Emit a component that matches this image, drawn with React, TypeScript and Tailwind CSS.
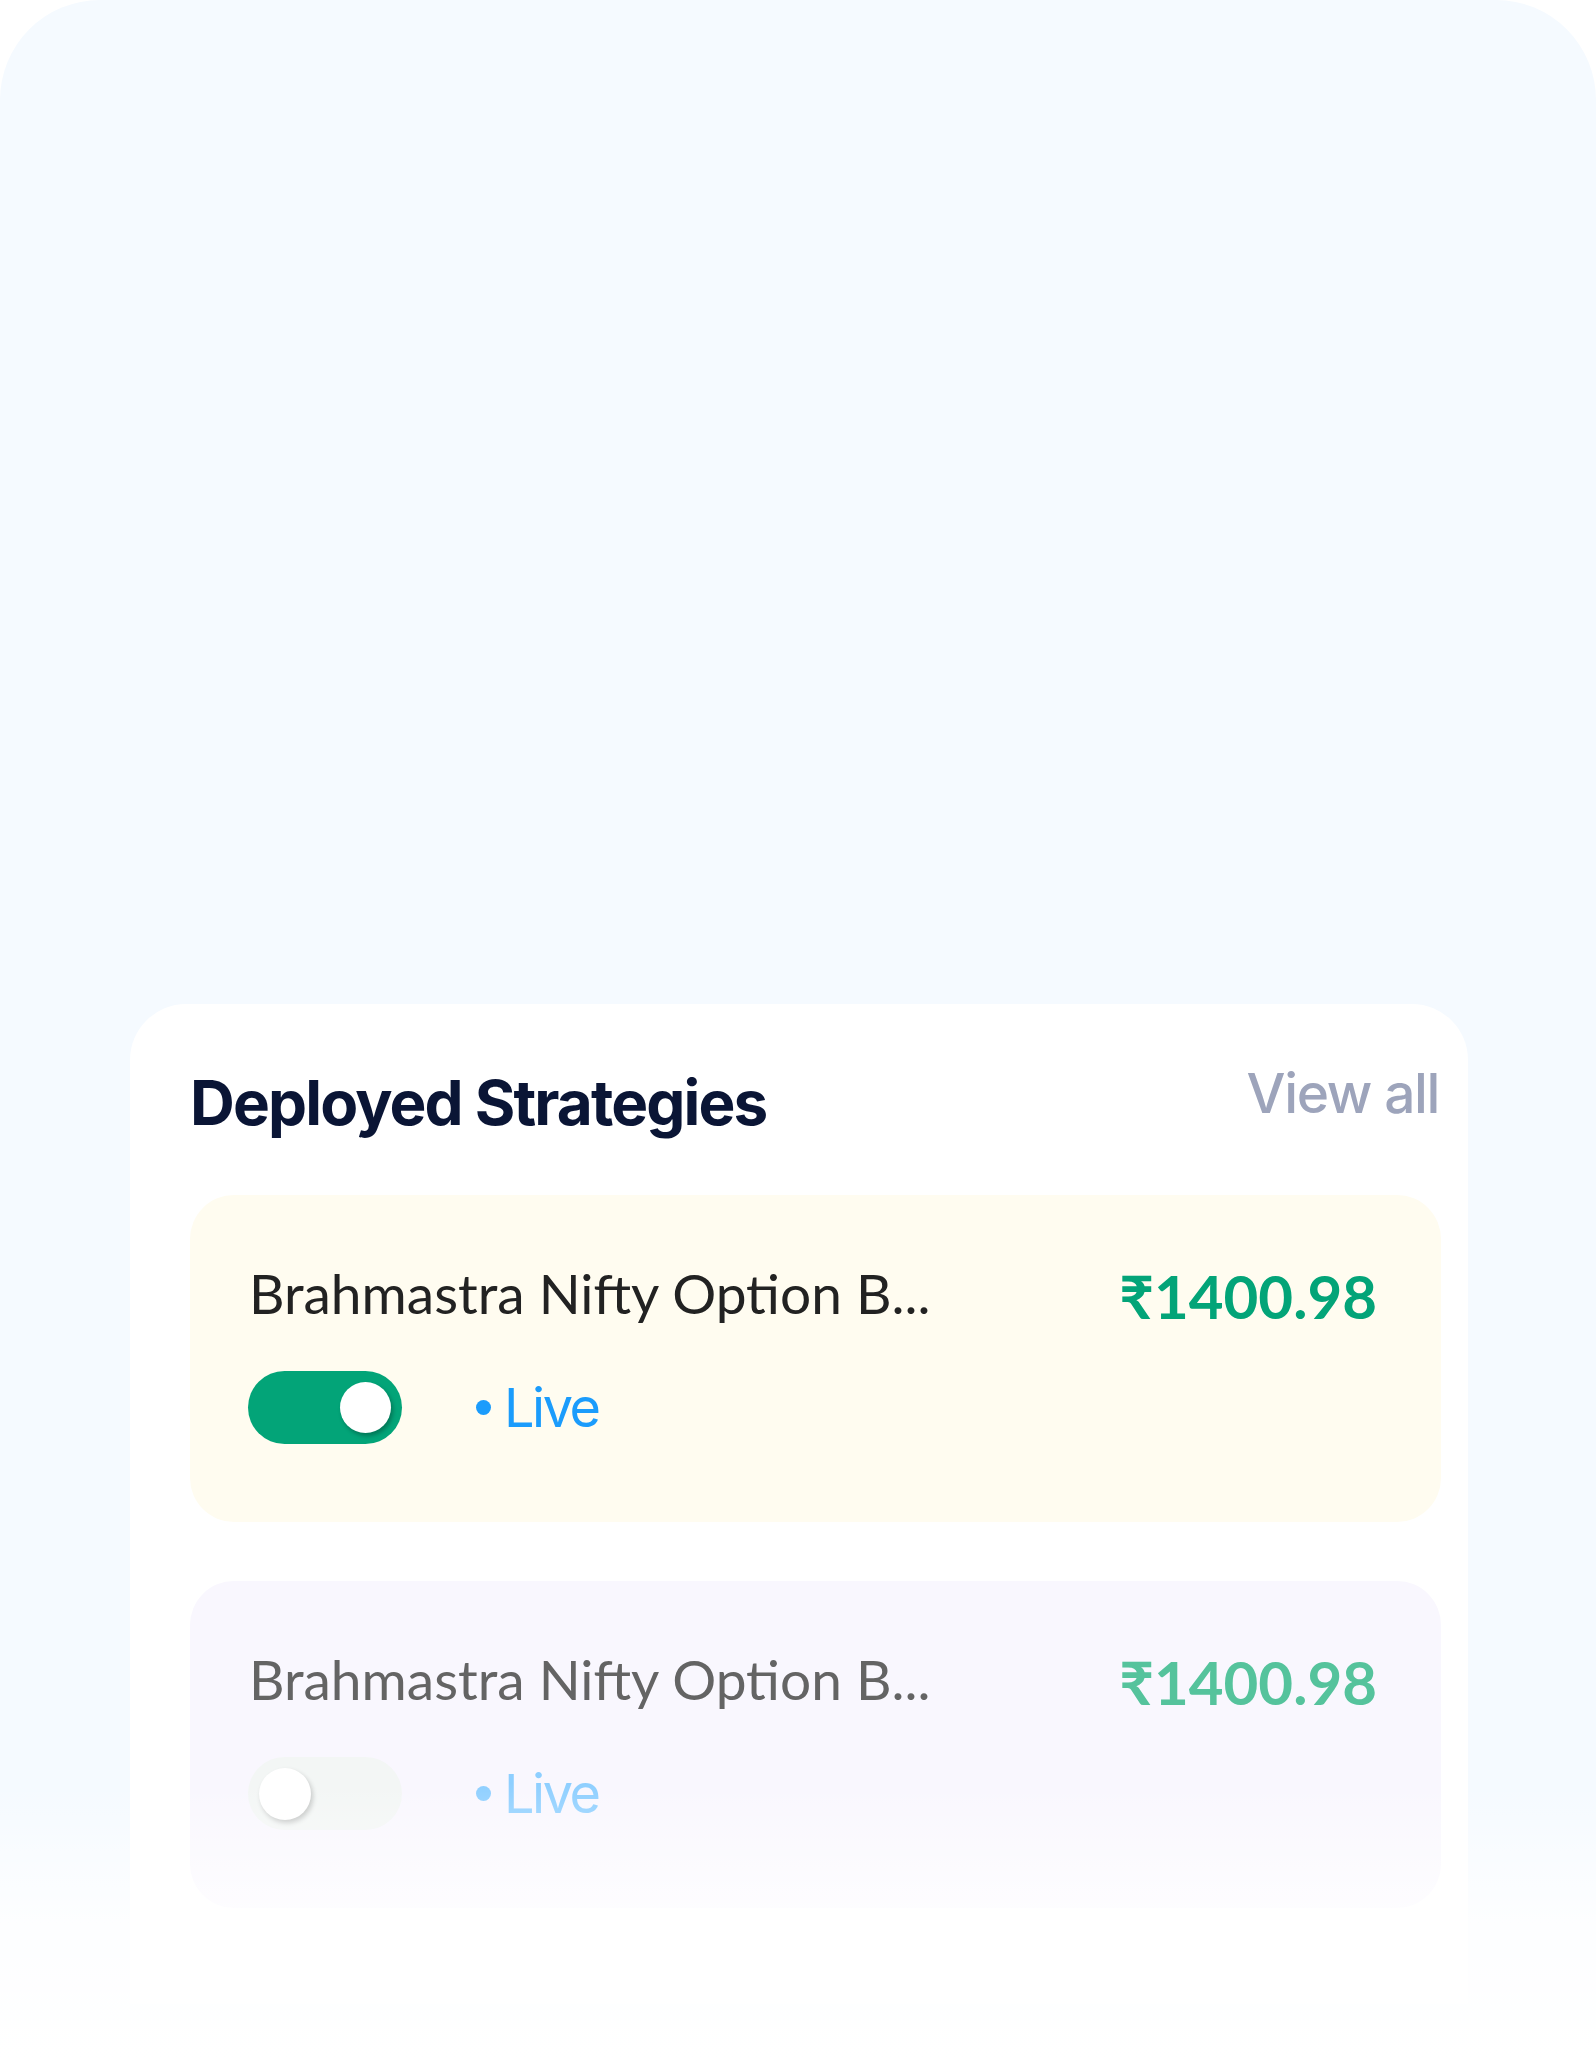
import React from "react";

function Toggle({ on }: { on: boolean }) {
  if (on) {
    return (
      <div className="flex h-[73px] w-[154px] shrink-0 items-center justify-end rounded-full bg-[#03a478] pr-[11px]">
        <div className="h-[51px] w-[51px] rounded-full bg-white shadow-[2px_3px_4px_rgba(0,0,0,0.28)]" />
      </div>
    );
  }
  return (
    <div className="flex h-[73px] w-[154px] shrink-0 items-center justify-start rounded-full bg-[#f3f6f5] pl-[11px]">
      <div className="h-[52px] w-[52px] rounded-full bg-white shadow-[2px_3px_5px_rgba(0,0,0,0.2)]" />
    </div>
  );
}

function StrategyCard({ active }: { active: boolean }) {
  return (
    <div
      className={
        active
          ? "flex h-[327px] flex-col rounded-[44px] bg-[#fffcf0] pl-[58px] pr-[64px] pt-[71px]"
          : "flex h-[327px] flex-col rounded-[44px] bg-[#f9f7fe] pl-[58px] pr-[64px] pt-[71px]"
      }
    >
      <div className="flex items-start justify-between">
        <span
          className={
            active
              ? "pl-[1px] text-[55px] leading-none text-[#222222]"
              : "pl-[1px] text-[55px] leading-none text-[#646464]"
          }
          style={{ fontFamily: "Lato, 'Noto Sans', sans-serif" }}
        >
          Brahmastra Nifty Option B...
        </span>
        <span
          className={
            active
              ? "text-[60px] font-bold leading-none text-[#03a478]"
              : "text-[60px] font-bold leading-none text-[#55c39c]"
          }
          style={{ fontFamily: "Lato, 'Noto Sans', sans-serif" }}
        >
          ₹1400.98
        </span>
      </div>
      <div className="mt-[45px] flex items-center">
        <Toggle on={active} />
        <div className="ml-[74px] flex items-center gap-[13px]">
          <div
            className={
              active
                ? "h-[15px] w-[15px] rounded-full bg-[#1b9cfc]"
                : "h-[15px] w-[15px] rounded-full bg-[#8ecfff]"
            }
          />
          <span
            className={
              active
                ? "text-[54px] leading-none tracking-[-0.045em] text-[#1b9cfc]"
                : "text-[54px] leading-none tracking-[-0.045em] text-[#8ecfff]"
            }
            style={{ fontFamily: "Inter, 'Noto Sans', sans-serif" }}
          >
            Live
          </span>
        </div>
      </div>
    </div>
  );
}

export default function App() {
  return (
    <div
      className="relative h-[2063px] w-[1596px] overflow-hidden bg-white"
      style={{ fontFamily: "Inter, 'Noto Sans', sans-serif" }}
    >
      <div className="h-[2063px] rounded-t-[100px] bg-[#f5faff] pl-[130px] pr-[128px] pt-[1004px]">
        <div className="h-[1000px] rounded-t-[56px] bg-white pl-[60px] pr-[27px] pt-[62px]">
          <div className="flex items-start justify-between">
            <h2 className="pt-[6px] text-[62px] font-bold leading-none tracking-[-0.03em] text-[#0a1535]">
              Deployed Strategies
            </h2>
            <span className="pr-[2px] text-[55px] font-medium leading-none tracking-[-0.025em] text-[#9da4bb]">
              View all
            </span>
          </div>
          <div className="mt-[61px] flex flex-col gap-[59px]">
            <StrategyCard active={true} />
            <StrategyCard active={false} />
          </div>
        </div>
      </div>
      <div className="pointer-events-none absolute bottom-0 left-0 h-[280px] w-full bg-gradient-to-b from-white/0 via-white/80 to-white" />
    </div>
  );
}
